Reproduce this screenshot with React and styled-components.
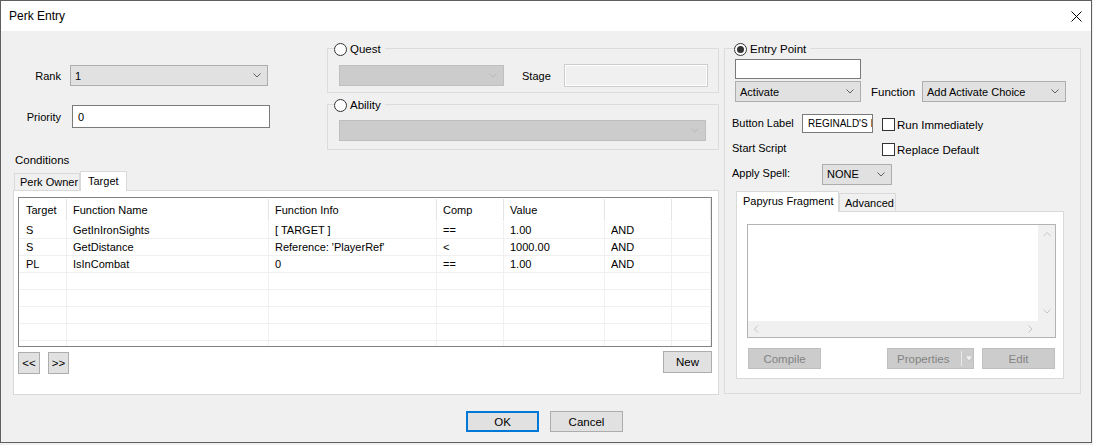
import React from "react";
import styled, { createGlobalStyle } from "styled-components";

const GlobalStyle = createGlobalStyle`
  *, *::before, *::after { box-sizing: border-box; }
  html, body { margin: 0; padding: 0; background: #f0f0f0; }
  body {
    font-family: "Liberation Sans", Arial, sans-serif;
    font-size: 11px;
    color: #000;
  }
`;

const Window = styled.div`
  width: 1092px;
  height: 443px;
  border: 1px solid #5f5f5f;
  background: #f0f0f0;
  display: flex;
  flex-direction: column;
  overflow: hidden;
`;

const TitleBar = styled.div`
  height: 30px;
  flex: none;
  background: #fff;
  display: flex;
  align-items: center;
  padding-left: 8px;
  font-size: 12px;
`;

const CloseIcon = styled.svg`
  margin-left: auto;
  margin-right: 9px;
`;

const Main = styled.div`
  display: flex;
  padding-top: 17px;
  padding-left: 12px;
`;

const LeftCol = styled.div`
  width: 706px;
  display: flex;
  flex-direction: column;
`;

const TopArea = styled.div`
  display: flex;
  height: 102px;
`;

const FormCol = styled.div`
  width: 314px;
  padding-top: 17px;
  display: flex;
  flex-direction: column;
  gap: 19px;
`;

const FormRow = styled.div`
  display: flex;
  align-items: center;
`;

const RightLabel = styled.span`
  width: 48px;
  text-align: right;
  margin-right: ${(p) => p.$gap}px;
`;

const GroupsCol = styled.div`
  width: 392px;
  display: flex;
  flex-direction: column;
  gap: 11px;
`;

const GroupBox = styled.div`
  position: relative;
  border: 1px solid #dcdcdc;
  height: ${(p) => p.$h}px;
  width: ${(p) => p.$w || "auto"};
  padding: ${(p) => p.$pad};
`;

const Legend = styled.div`
  position: absolute;
  top: -7px;
  left: ${(p) => p.$left}px;
  background: #f0f0f0;
  display: flex;
  align-items: center;
  gap: 3px;
  padding-right: 4px;
  height: 14px;
  font-size: 11.5px;
`;

const Radio = styled.span`
  width: 13px;
  height: 13px;
  border-radius: 50%;
  border: 1px solid #333;
  background: #fff;
  position: relative;
  &::after {
    content: "";
    display: ${(p) => (p.$checked ? "block" : "none")};
    position: absolute;
    left: 2px;
    top: 2px;
    width: 7px;
    height: 7px;
    border-radius: 50%;
    background: #333;
  }
`;

const Combo = styled.div`
  width: ${(p) => p.$w}px;
  height: 21px;
  flex: none;
  display: flex;
  align-items: center;
  padding-left: 4px;
  background: ${(p) => (p.$disabled ? "#cccccc" : "#e1e1e1")};
  border: 1px solid ${(p) => (p.$disabled ? "#bfbfbf" : "#adadad")};
  margin-left: ${(p) => p.$ml || 0}px;
  span { flex: 1; }
  svg { margin-right: 6px; }
`;

const TextBox = styled.div`
  width: ${(p) => p.$w}px;
  height: ${(p) => p.$h}px;
  flex: none;
  background: ${(p) => (p.$disabled ? "#f0f0f0" : "#fff")};
  border: 1px solid ${(p) => (p.$disabled ? "#cccccc" : "#7a7a7a")};
  box-shadow: ${(p) => (p.$disabled ? "inset 0 0 0 1px #fff" : "none")};
  margin-left: ${(p) => p.$ml || 0}px;
  display: flex;
  align-items: center;
  padding-left: ${(p) => p.$pl || 4}px;
  overflow: hidden;
  white-space: nowrap;
  font-size: ${(p) => p.$fs || 11}px;
`;

const QuestRow = styled.div`
  display: flex;
  align-items: center;
`;

const StageLabel = styled.span`
  margin-left: 18px;
  margin-right: 13px;
`;

const SectionLabel = styled.div`
  margin-top: 4px;
  line-height: 13px;
  padding-left: 2px;
  font-size: 11.5px;
`;

const TabStrip = styled.div`
  display: flex;
  align-items: flex-end;
  height: ${(p) => p.$h}px;
  margin-top: ${(p) => p.$mt}px;
  margin-left: ${(p) => p.$ml}px;
`;

const Tab = styled.div`
  width: ${(p) => p.$w}px;
  height: ${(p) => (p.$active ? p.$h + 1 : p.$h)}px;
  margin-bottom: ${(p) => (p.$active ? -1 : 0)}px;
  background: ${(p) => (p.$active ? "#fff" : "#f0f0f0")};
  border: 1px solid #d9d9d9;
  border-bottom: none;
  position: relative;
  z-index: ${(p) => (p.$active ? 1 : 0)};
  display: flex;
  align-items: center;
  padding-left: ${(p) => p.$pl}px;
  padding-bottom: ${(p) => (p.$active ? 2 : 0)}px;
  font-size: 11px;
  white-space: nowrap;
  overflow: hidden;
`;

const TabPanel = styled.div`
  width: ${(p) => p.$w}px;
  height: ${(p) => p.$h}px;
  margin-left: ${(p) => p.$ml || 0}px;
  background: #fff;
  border: 1px solid #d9d9d9;
  padding: ${(p) => p.$pad};
`;

const ListView = styled.div`
  width: 694px;
  height: 150px;
  border: 1px solid #828282;
  overflow: hidden;
  background: #fff;
`;

const cols = "48px 202px 168px 67px 101px 67px 1fr";

const HeaderRow = styled.div`
  display: grid;
  grid-template-columns: ${cols};
  height: 24px;
`;

const HeaderCell = styled.div`
  display: flex;
  align-items: center;
  padding-left: ${(p) => (p.$first ? 7 : 6)}px;
  border-right: 1px solid #e5e5e5;
  margin: 1px 0 1px;
`;

const DataRow = styled.div`
  display: grid;
  grid-template-columns: ${cols};
  height: 17px;
  border-bottom: 1px solid #f0f0f0;
`;

const Cell = styled.div`
  padding-left: ${(p) => (p.$first ? 7 : 6)}px;
  padding-top: 1px;
  line-height: 15px;
  border-right: 1px solid #f0f0f0;
  white-space: nowrap;
  overflow: hidden;
`;

const ButtonRow = styled.div`
  display: flex;
  align-items: flex-start;
  margin-top: ${(p) => p.$mt || 4}px;
`;

const Button = styled.div`
  width: ${(p) => p.$w}px;
  height: ${(p) => p.$h || 21}px;
  flex: none;
  display: flex;
  align-items: center;
  justify-content: center;
  background: ${(p) => (p.$disabled ? "#cccccc" : "#e1e1e1")};
  border: ${(p) => (p.$default ? "2px solid #0078d7" : p.$disabled ? "1px solid #bfbfbf" : "1px solid #adadad")};
  color: ${(p) => (p.$disabled ? "#838383" : "#000")};
  margin-left: ${(p) => p.$ml || 0}px;
  margin-top: ${(p) => p.$mt || 0}px;
  font-size: 11.5px;
`;

const SplitButton = styled(Button)`
  justify-content: flex-start;
  padding-left: 9px;
  span { width: 64px; }
  i {
    width: 1px;
    height: 15px;
    background: #eaeaea;
    margin-right: 3px;
  }
`;

const EntryGroup = styled(GroupBox)`
  margin-left: 5px;
  display: flex;
  flex-direction: column;
`;

const FunctionRow = styled.div`
  display: flex;
  align-items: center;
  margin-top: 2px;
`;

const FunctionLabel = styled.span`
  width: 51px;
  margin-left: 10px;
  font-size: 11.5px;
`;

const FieldGrid = styled.div`
  display: grid;
  grid-template-columns: 70px 80px 1fr;
  grid-auto-rows: 20px;
  row-gap: 5px;
  align-items: center;
  margin-top: 11px;
`;

const CheckItem = styled.label`
  grid-column: 3;
  display: flex;
  align-items: center;
  gap: 2px;
  font-size: 11.5px;
  margin-top: ${(p) => p.$mt || 0}px;
`;

const CheckBox = styled.span`
  width: 13px;
  height: 13px;
  border: 1px solid #333;
  background: #fff;
`;

const SpellCombo = styled(Combo)`
  grid-column: 2 / 4;
  margin-left: 20px;
  margin-top: 2px;
`;

const ScriptBox = styled.div`
  width: 309px;
  height: 114px;
  border: 1px solid #b4b4b4;
  display: grid;
  grid-template-columns: 1fr 17px;
  grid-template-rows: 1fr 16px;
  background: #fff;
`;

const ScrollV = styled.div`
  background: #f0f0f0;
  display: flex;
  flex-direction: column;
  align-items: center;
  justify-content: space-between;
  padding: 7px 0 7px;
`;

const ScrollH = styled.div`
  grid-column: 1 / 3;
  background: #f0f0f0;
  display: flex;
  align-items: center;
  justify-content: space-between;
  padding: 0 22px 0 6px;
`;

const Footer = styled.div`
  display: flex;
  justify-content: center;
  gap: 11px;
  padding-top: 16px;
  padding-right: 3px;
`;

const Chevron = ({ color = "#606060", dir = "down" }) => {
  const paths = {
    down: "M0.5 0.5 L4 4 L7.5 0.5",
    up: "M0.5 4 L4 0.5 L7.5 4",
  };
  if (dir === "left" || dir === "right") {
    return (
      <svg width="5" height="8" viewBox="0 0 5 8">
        <path
          d={dir === "left" ? "M4 0.5 L0.5 4 L4 7.5" : "M0.5 0.5 L4 4 L0.5 7.5"}
          fill="none"
          stroke={color}
        />
      </svg>
    );
  }
  return (
    <svg width="8" height="5" viewBox="0 0 8 5">
      <path d={paths[dir]} fill="none" stroke={color} />
    </svg>
  );
};

const rows = [
  ["S", "GetInIronSights", "[ TARGET ]", "==", "1.00", "AND"],
  ["S", "GetDistance", "Reference: 'PlayerRef'", "<", "1000.00", "AND"],
  ["PL", "IsInCombat", "0", "==", "1.00", "AND"],
];
const headers = ["Target", "Function Name", "Function Info", "Comp", "Value", "", ""];

function App() {
  const filled = [...rows];
  while (filled.length < 8) filled.push(["", "", "", "", "", ""]);

  return (
    <>
      <GlobalStyle />
      <Window>
        <TitleBar>
          Perk Entry
          <CloseIcon width="11" height="11" viewBox="0 0 11 11">
            <path d="M0.5 0.5 L10.5 10.5 M10.5 0.5 L0.5 10.5" stroke="#000" strokeWidth="1" />
          </CloseIcon>
        </TitleBar>

        <Main>
          <LeftCol>
            <TopArea>
              <FormCol>
                <FormRow>
                  <RightLabel $gap={9}>Rank</RightLabel>
                  <Combo $w={198}>
                    <span>1</span>
                    <Chevron />
                  </Combo>
                </FormRow>
                <FormRow>
                  <RightLabel $gap={11}>Priority</RightLabel>
                  <TextBox $w={198} $h={23} $pl={5}>0</TextBox>
                </FormRow>
              </FormCol>

              <GroupsCol>
                <GroupBox $h={45} $pad="15px 0 0 11px">
                  <Legend $left={6}>
                    <Radio />
                    Quest
                  </Legend>
                  <QuestRow>
                    <Combo $w={165} $disabled>
                      <span />
                      <Chevron color="#b8b8b8" />
                    </Combo>
                    <StageLabel>Stage</StageLabel>
                    <TextBox $w={144} $h={23} $disabled />
                  </QuestRow>
                </GroupBox>
                <GroupBox $h={46} $pad="15px 0 0 11px">
                  <Legend $left={6}>
                    <Radio />
                    Ability
                  </Legend>
                  <Combo $w={367} $disabled>
                    <span />
                    <Chevron color="#b8b8b8" />
                  </Combo>
                </GroupBox>
              </GroupsCol>
            </TopArea>

            <SectionLabel>Conditions</SectionLabel>
            <TabStrip $h={19} $mt={4} $ml={1}>
              <Tab $w={66} $h={17} $pl={5}>Perk Owner</Tab>
              <Tab $w={47} $h={19} $pl={7} $active>Target</Tab>
            </TabStrip>
            <TabPanel $w={706} $h={205} $pad="6px 7px 0 4px">
              <ListView>
                <HeaderRow>
                  {headers.map((h, i) => (
                    <HeaderCell key={i} $first={i === 0}>{h}</HeaderCell>
                  ))}
                </HeaderRow>
                {filled.map((r, i) => (
                  <DataRow key={i}>
                    {r.map((c, j) => (
                      <Cell key={j} $first={j === 0}>{c}</Cell>
                    ))}
                    <Cell />
                  </DataRow>
                ))}
              </ListView>
              <ButtonRow>
                <Button $w={22} $h={22} $mt={1}>&lt;&lt;</Button>
                <Button $w={21} $h={22} $mt={1} $ml={8}>&gt;&gt;</Button>
                <Button $w={49} $h={22} $ml={594}>New</Button>
              </ButtonRow>
            </TabPanel>
          </LeftCol>

          <EntryGroup $w="357px" $h={346} $pad="10px 0 0 7px">
            <Legend $left={9}>
              <Radio $checked />
              Entry Point
            </Legend>
            <TextBox $w={126} $h={20} $ml={3} />
            <FunctionRow>
              <Combo $w={126} $ml={3}>
                <span>Activate</span>
                <Chevron />
              </Combo>
              <FunctionLabel>Function</FunctionLabel>
              <Combo $w={144}>
                <span>Add Activate Choice</span>
                <Chevron />
              </Combo>
            </FunctionRow>

            <FieldGrid>
              <span>Button Label</span>
              <TextBox $w={71} $h={19} $pl={5} $fs={10}>REGINALD'S I</TextBox>
              <CheckItem $mt={3}>
                <CheckBox />
                Run Immediately
              </CheckItem>
              <span>Start Script</span>
              <CheckItem $mt={3}>
                <CheckBox />
                Replace Default
              </CheckItem>
              <span>Apply Spell:</span>
              <SpellCombo $w={70}>
                <span>NONE</span>
                <Chevron />
              </SpellCombo>
            </FieldGrid>

            <TabStrip $h={20} $mt={8} $ml={4}>
              <Tab $w={103} $h={20} $pl={6} $active>Papyrus Fragment</Tab>
              <Tab $w={57} $h={18} $pl={5}>Advanced</Tab>
            </TabStrip>
            <TabPanel $w={328} $h={168} $ml={4} $pad="12px 0 0 10px">
              <ScriptBox>
                <div />
                <ScrollV>
                  <Chevron dir="up" color="#c4c4c4" />
                  <Chevron dir="down" color="#c4c4c4" />
                </ScrollV>
                <ScrollH>
                  <Chevron dir="left" color="#c4c4c4" />
                  <Chevron dir="right" color="#c4c4c4" />
                </ScrollH>
              </ScriptBox>
              <ButtonRow $mt={10}>
                <Button $w={73} $ml={1} $disabled>Compile</Button>
                <SplitButton $w={87} $ml={66} $disabled>
                  <span>Properties</span>
                  <i />
                  <svg width="8" height="5" viewBox="0 0 8 5">
                    <path d="M0 0 L8 0 L4 5 Z" fill="#f2f2f2" stroke="#a8a8a8" strokeWidth="0.5" />
                  </svg>
                </SplitButton>
                <Button $w={73} $ml={8} $disabled>Edit</Button>
              </ButtonRow>
            </TabPanel>
          </EntryGroup>
        </Main>

        <Footer>
          <Button $w={73} $default>OK</Button>
          <Button $w={73}>Cancel</Button>
        </Footer>
      </Window>
    </>
  );
}

export default App;
